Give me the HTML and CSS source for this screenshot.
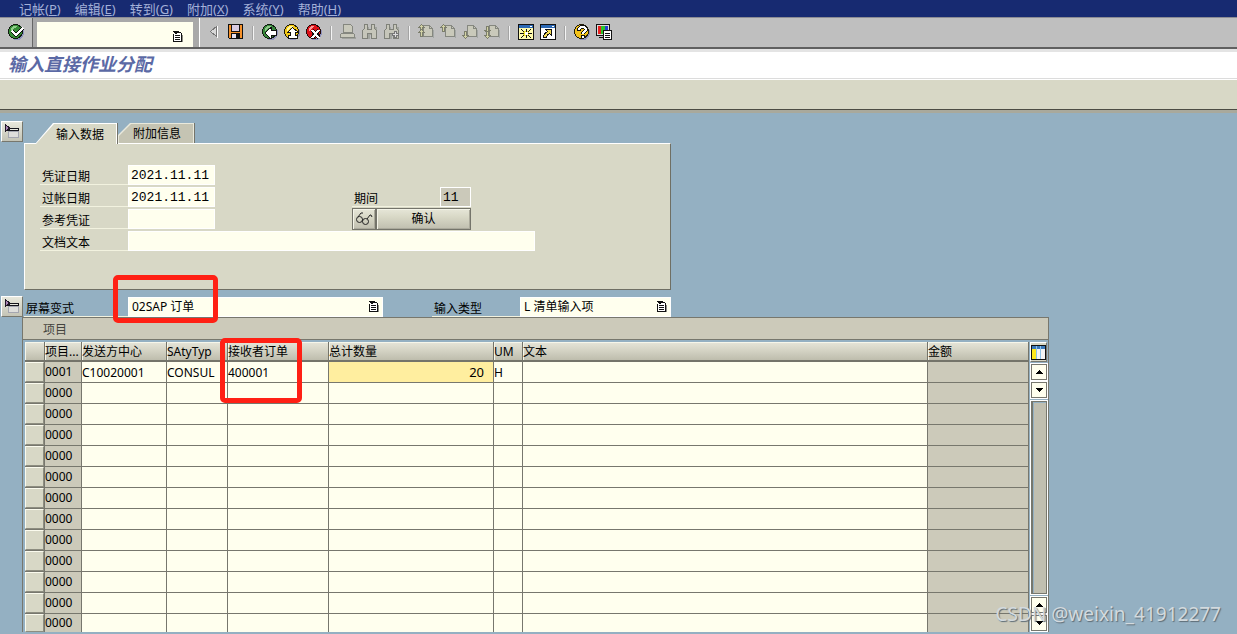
FILE: index.html
```html
<!DOCTYPE html>
<html lang="zh-CN">
<head>
<meta charset="utf-8">
<title>输入直接作业分配</title>
<link rel="stylesheet" href="styles.css">
</head>
<body>
<svg class="defs" aria-hidden="true">
  <symbol id="list" viewBox="0 0 10 12"><path fill="#8d8d86" d="M2 11h8V4H8v6H2z"/><path fill="#fff" d="M1 2h7v8H1z"/><path fill="#111" d="M0 0h6v1H0zM1 1h4v1H1zM2 2h2v1H2zM5 1h3v1H5zM0 3h1v8H0zM8 2h1v9H8zM0 10h9v1H0zM2 4h5v1H2zM2 6h5v1H2zM2 8h5v1H2z"/></symbol>
  <symbol id="page" viewBox="0 0 16 16"><path fill="#a3a7a5" d="M6 14h10V6h-1v8z"/><path fill="#c9c9ba" stroke="#85877f" d="M5.500 1.500h6l3 3v8h-9z"/><path fill="none" stroke="#85877f" d="M11.500 1.500v3h3"/></symbol>
  <symbol id="up" viewBox="0 0 7 8"><path fill="#d3d3a6" stroke="#7c7e6c" d="M3.500.5L.5 3.500h2v4h2v-4h2z"/></symbol>
  <symbol id="down" viewBox="0 0 7 8"><path fill="#d3d3a6" stroke="#7c7e6c" d="M3.500 7.500L.5 4.500h2V.5h2v4h2z"/></symbol>
  <symbol id="bino" viewBox="0 0 16 16"><path fill="#a1a49e" d="M3 3h4v3h4V3h4v12h-5v-4H8v4H3z"/><path fill="#c6c6ba" stroke="#7f8179" d="M2.500 .5h3v5h4v-5h3v4l2 2v8h-5v-5h-4v5h-5v-8l2-2z"/></symbol>
  <symbol id="expand" viewBox="0 0 16 16"><path fill="#fff" d="M4 5h9v8H4z"/><path fill="#dededb" stroke="#a4a6b0" d="M4.500 7.500h10v6h-10z"/><path fill="#15151c" d="M3 4h12v3H3z"/><path fill="#e9e9e0" d="M6 5h8v1H6z"/><path fill="#a985b5" stroke="#221828" d="M1.500.5v7l4-3.500z"/></symbol>
</svg>

<nav class="menubar" aria-label="菜单">
  <a href="#">记帐(<u>P</u>)</a><a href="#">编辑(<u>E</u>)</a><a href="#">转到(<u>G</u>)</a><a href="#">附加(<u>X</u>)</a><a href="#">系统(<u>Y</u>)</a><a href="#">帮助(<u>H</u>)</a>
</nav>

<div class="toolbar">
  <div class="enter"><button class="tool" aria-label="回车"><svg viewBox="0 0 16 16"><circle cx="9" cy="9" r="7" fill="#8f93bd"/><circle cx="7.500" cy="7.500" r="7" fill="#368c36" stroke="#101c10"/><path fill="#8fd08a" d="M3 4l2-2h4v1L5 5 3 7z"/><path fill="none" stroke="#111" stroke-width="4" d="M4 7l4 4 7-7"/><path fill="none" stroke="#fff" stroke-width="2" d="M4 7l4 4 7-7"/></svg></button></div>
  <div class="command"><input type="text" aria-label="命令"><svg class="list-icon"><use href="#list"/></svg></div>
  <div class="tools">
    <button class="tool" aria-label="收起"><svg viewBox="0 0 16 16"><path fill="#d9d9d9" stroke="#777" d="M4.500 7.500l6-5v10z"/><path stroke="#fff" d="M11.500 2v12"/></svg></button>
    <button class="tool" aria-label="保存"><svg viewBox="0 0 16 16"><path fill="#111" d="M0 0h15v15H1L0 14z"/><path fill="#f6912a" d="M1 1h2v13H1zM12 1h2v13h-2zM3 8h9v1H3z"/><path fill="#d8cbe2" d="M4 1h7v6H4z"/><path fill="#e5e0ee" d="M4 10h6v4H4z"/><path fill="#111" d="M8 10h2v4H8z"/></svg></button>
    <i class="sep"></i>
    <button class="tool" aria-label="返回"><svg viewBox="0 0 16 16"><circle cx="9" cy="9" r="7" fill="#8f93bd"/><circle cx="7.500" cy="7.500" r="7" fill="#37883b" stroke="#101c10"/><path fill="#8fc98a" d="M3 4l2-2h4v1L5 5 3 7z"/><path fill="#111" d="M3 8h1V7h1V6h1V5h1V4h1V3h2v3h5v6h-5v3H8v-1H7v-1H6v-1H5v-1H4v-1H3z"/><path fill="#fff" d="M4 9V8h1V7h1V6h1V5h2v2h5v4H9v3H8v-1H7v-1H6v-1H5v-1H4z"/></svg></button>
    <button class="tool" aria-label="退出"><svg viewBox="0 0 16 16"><circle cx="9" cy="9" r="7" fill="#8f93bd"/><circle cx="7.500" cy="7.500" r="7" fill="#f3c814" stroke="#221c08"/><path fill="#fff6a0" d="M3 4l2-2h4v1L5 5 3 7z"/><path fill="#fff" stroke="#111" d="M8.500 3.500l-5 5h3v3h-2v3h9v-3h-2v-3h3z"/></svg></button>
    <button class="tool" aria-label="取消"><svg viewBox="0 0 16 16"><circle cx="9" cy="9" r="7" fill="#8f93bd"/><circle cx="7.500" cy="7.500" r="7" fill="#dc1018" stroke="#240808"/><path fill="#ff9a96" d="M3 4l2-2h3v1L5 5 3 7z"/><path stroke="#111" stroke-width="4" d="M6 6l7 8M13 6l-7 8"/><path stroke="#fff" stroke-width="2" d="M6 6l7 8M13 6l-7 8"/></svg></button>
    <i class="sep"></i>
    <button class="tool" aria-label="打印"><svg viewBox="0 0 16 16"><path fill="#a1a39e" d="M2 13h14v2H2z"/><path fill="#c9c9bb" stroke="#85877f" d="M3.500 .5h7l2 2v6h-9zM1.500 9.500h12l1 1v3H.5v-3z"/></svg></button>
    <button class="tool" aria-label="查找"><svg><use href="#bino"/></svg></button>
    <button class="tool" aria-label="继续查找"><svg viewBox="0 0 16 16"><use href="#bino"/><path fill="#ddd" stroke="#777" d="M10.500 7.500h2v2h2v2h-2v2h-2v-2h-2v-2h2z"/></svg></button>
    <i class="sep"></i>
    <button class="tool" aria-label="首页"><svg viewBox="0 0 16 16"><use href="#page"/><use href="#up" x="0" y="0" width="7" height="8"/><use href="#up" x="0" y="5" width="7" height="8"/></svg></button>
    <button class="tool" aria-label="上一页"><svg viewBox="0 0 16 16"><use href="#page"/><use href="#up" x="0" y="0" width="7" height="8"/></svg></button>
    <button class="tool" aria-label="下一页"><svg viewBox="0 0 16 16"><use href="#page"/><use href="#down" x="0" y="7" width="7" height="8"/></svg></button>
    <button class="tool" aria-label="末页"><svg viewBox="0 0 16 16"><use href="#page"/><use href="#down" x="0" y="2" width="7" height="8"/><use href="#down" x="0" y="7" width="7" height="8"/></svg></button>
    <i class="sep"></i>
    <button class="tool" aria-label="新会话"><svg viewBox="0 0 16 16"><path fill="#111" d="M0 0h16v16H0z"/><path fill="#2c69b5" d="M1 1h14v3H1z"/><path fill="#fff" d="M12 2h2v1h-2z"/><path fill="#fffbb0" d="M1 4h14v11H1z"/><path fill="#f5e62c" d="M5 7h6v5H5z"/><path stroke="#111" d="M3 5l3 3M13 5l-3 3M3 14l3-3M13 14l-3-3M2 9.500h4M10 9.500h4M8.500 5v3M8.500 11v3"/><path fill="#fff" d="M7 8h3v3H7z"/></svg></button>
    <button class="tool" aria-label="创建快捷方式"><svg viewBox="0 0 16 16"><path fill="#111" d="M0 0h16v16H0z"/><path fill="#2c69b5" d="M1 1h14v3H1z"/><path fill="#fff" d="M1 4h14v11H1zM12 2h2v1h-2z"/><path fill="#f5dc54" stroke="#111" d="M5.500 5.500h6v6l-2-2c-2 1-3 2-3 4h-3c0-3 2-5 4-6z"/></svg></button>
    <i class="sep"></i>
    <button class="tool" aria-label="帮助"><svg viewBox="0 0 16 16"><circle cx="9" cy="9" r="7" fill="#8f93bd"/><circle cx="7.500" cy="7.500" r="7" fill="#f3c21a" stroke="#221c08"/><path fill="none" stroke="#111" stroke-width="4" d="M5 7V5l2-2h3l2 2v1L9 9v1M9 11v3"/><path fill="none" stroke="#fff" stroke-width="2" d="M5 6V5l2-2h3l2 2v1L9 9v1M9 12v2"/></svg></button>
    <button class="tool" aria-label="布局"><svg viewBox="0 0 16 16"><path fill="#111" d="M0 0h14v12H0zM3 13h6v1H3z"/><path fill="#ddd" d="M1 1h12v10H1z"/><path fill="#e82020" d="M2 2h3v8H2z"/><path fill="#28c428" d="M5 2h4v8H5z"/><path fill="#2440cc" d="M9 2h3v8H9z"/><path fill="#fff" stroke="#111" d="M7.500 6.500h8v9h-8z"/><path stroke="#111" d="M9 9.500h5M9 11.500h5M9 13.500h5"/></svg></button>
  </div>
</div>

<header class="title"><h1>输入直接作业分配</h1></header>
<div class="appbar"></div>

<main class="work">
  <section class="entry">
    <button class="toggle" aria-label="展开标题"><svg><use href="#expand"/></svg></button>
    <div class="tabbed">
      <div class="tabs" role="tablist">
        <button class="tab active" role="tab" aria-selected="true"><span>输入数据</span></button>
        <button class="tab" role="tab" aria-selected="false"><span>附加信息</span></button>
      </div>
      <div class="panel">
        <label class="lead" for="docdate">凭证日期</label><input id="docdate" class="date" type="text" value="2021.11.11">
        <label class="lead" for="postdate">过帐日期</label><input id="postdate" class="date" type="text" value="2021.11.11">
        <div class="period"><label for="period">期间</label><input id="period" type="text" value="11" readonly></div>
        <label class="lead" for="refdoc">参考凭证</label><input id="refdoc" class="date" type="text">
        <div class="actions"><button class="raised" aria-label="显示"><svg class="glasses" viewBox="0 0 18 14"><g fill="none" stroke="#222"><circle cx="4.500" cy="7.500" r="3"/><circle cx="10.500" cy="9.500" r="3"/><path d="M3 5l3-4h2M12 7l3-4h1l1 2M7 8h1"/></g></svg></button><button class="raised">确认</button></div>
        <label class="lead" for="doctext">文档文本</label><input id="doctext" class="wide" type="text">
      </div>
    </div>
  </section>

  <section class="variant">
    <button class="toggle" aria-label="展开项目"><svg><use href="#expand"/></svg></button>
    <label class="variant-label" for="variant">屏幕变式</label>
    <div class="combo variant-box"><select id="variant"><option>02SAP 订单</option></select><svg class="list-icon"><use href="#list"/></svg></div>
    <label class="kind-label" for="kind">输入类型</label>
    <div class="combo kind-box"><select id="kind"><option>L 清单输入项</option></select><svg class="list-icon"><use href="#list"/></svg></div>
    <span class="mark mark-variant"></span>
  </section>

  <section class="items">
    <h2>项目</h2>
    <div class="grid">
      <table>
        <colgroup><col class="c-sel"><col class="c-no"><col class="c-center"><col class="c-type"><col class="c-order"><col class="c-qty"><col class="c-um"><col><col class="c-amount"></colgroup>
        <thead><tr><th aria-label="选择"></th><th>项目...</th><th>发送方中心</th><th>SAtyTyp</th><th>接收者订单</th><th>总计数量</th><th>UM</th><th>文本</th><th>金额</th></tr></thead>
        <tbody id="rows"></tbody>
      </table>
      <div class="scroll">
        <button class="config" aria-label="表格设置"><svg viewBox="0 0 15 15"><path fill="#111" d="M0 0h15v15H0z"/><path fill="#3979bb" d="M1 1h13v3H1z"/><path fill="#ffe91c" d="M1 4h4v10H1z"/><path fill="#f4f4f4" d="M6 4h3v10H6zM10 4h4v10h-4z"/><path fill="#8fc3e8" d="M5 1h1v13H5zM9 1h1v13H9z"/></svg></button>
        <button class="arrow" aria-label="首行"><svg viewBox="0 0 8 4"><path d="M0 4l4-4 4 4z"/></svg></button>
        <button class="arrow" aria-label="上一行"><svg viewBox="0 0 8 4"><path d="M0 0h8L4 4z"/></svg></button>
        <div class="track"></div>
        <button class="arrow" aria-label="下一行"><svg viewBox="0 0 8 4"><path d="M0 4l4-4 4 4z"/></svg></button>
        <button class="arrow" aria-label="末行"><svg viewBox="0 0 8 4"><path d="M0 0h8L4 4z"/></svg></button>
      </div>
    </div>
    <span class="mark mark-order"></span>
  </section>
</main>
<div class="watermark">CSDN @weixin_41912277</div>
<script src="rows.js"></script>
</body>
</html>
```
FILE: rows.js
```
const fields = ["发送方中心", "作业类型", "接收者订单", "总计数量", "单位", "文本"];
const first = ["C10020001", "CONSUL", "400001", "20", "H", ""];
const body = document.getElementById("rows");

for (let r = 0; r < 13; r++) {
  const cells = fields.map((name, i) => {
    const value = r === 0 ? first[i] : "";
    const cls = r === 0 && i === 3 ? ' class="qty"' : "";
    return `<td${cls}><input type="text" aria-label="${name} ${r + 1}" value="${value}"></td>`;
  }).join("");
  body.insertAdjacentHTML("beforeend",
    `<tr><td class="pick"><button aria-label="选择行 ${r + 1}"></button></td><td class="fixed">${r === 0 ? "0001" : "0000"}</td>${cells}<td class="fixed"></td></tr>`);
}
```
FILE: styles.css
```css
* { box-sizing: border-box; }

body {
  margin: 0;
  min-height: 100vh;
  overflow: hidden;
  position: relative;
  background: #94b0c2;
  color: #000;
  font: 12px/16px "Noto Sans", "Noto Sans CJK SC", sans-serif;
}

button, input, select { font: inherit; color: inherit; margin: 0; padding: 0; border: 0; border-radius: 0; }
input, select { background: #ffffee; min-width: 0; outline: 0; }
button { background: none; }
svg { display: block; shape-rendering: crispEdges; }
.defs { position: absolute; width: 0; height: 0; }

.menubar { display: flex; gap: 14px; height: 17px; padding-left: 19px; background: #172a71; }
.menubar a { color: #a3b0d8; text-decoration: none; font-size: 13px; line-height: 18px; }

.toolbar { display: flex; height: 32px; background: #bfbfbf; border-top: 1px solid #8c8c94; border-bottom: 2px solid #606060; }
.enter { width: 33px; padding: 6px 8px; border-right: 1px solid #666; }
.command { position: relative; width: 167px; padding: 4px 6px 0 4px; background: #a9a9a9; border-right: 1px solid #fff; }
.command input { display: block; width: 100%; height: 25px; padding: 0 20px 0 4px; }
.list-icon { position: absolute; right: 4px; top: 4px; width: 10px; height: 12px; pointer-events: none; }
.command .list-icon { right: 16px; top: 13px; }
.tools { display: flex; gap: 6px; padding: 6px; }
.tool, .tool svg { display: block; width: 16px; height: 16px; }
.sep { width: 2px; height: 14px; margin: 2px 2px 0; background: #f4f4f4; border-left: 1px solid #a4a4a4; }

.title { height: 30px; background: #fff; border-top: 3px solid #e4e4e4; border-bottom: 1px solid #dcdcdc; padding-left: 8px; }
h1 { margin: 0; color: #5b69a5; font: italic bold 18px/22px "Noto Sans CJK SC", sans-serif; }
.appbar { height: 34px; background: #d8d8c6; border-top: 1px solid #fff; border-bottom: 3px solid #a9a99c; box-shadow: inset 0 -1px #4c4c44; }

.work { padding: 10px 188px 0 0; }
.entry { display: flex; align-items: flex-start; gap: 1px; }
.toggle { display: grid; place-items: center; flex: none; width: 22px; height: 21px; border: 1px solid; border-color: #fff #77776d #77776d #fff; background: linear-gradient(#e8e8dc, #c4c4b6); margin-left: 1px; }
.entry .toggle { margin-top: -2px; }
.toggle svg { width: 16px; height: 16px; }
.tabbed { flex: 1; max-width: 647px; }
.tabs { display: flex; padding-left: 11px; height: 20px; }
.tab { position: relative; isolation: isolate; height: 20px; background: #fff; }
.tab::before { content: ""; position: absolute; z-index: -1; inset: 1px 1px 0; background: #d8d8c6; }
.tab.active { width: 83px; height: 21px; padding: 2px 0 0 8px; clip-path: polygon(18px 0, 100% 0, 100% 100%, 0 100%); border-right: 1px solid #74746a; }
.tab.active::before { clip-path: polygon(18px 0, 100% 0, 100% 100%, 0 100%); }
.tab:not(.active) { width: 77px; padding: 2px 0 0 2px; background: #e9e9dc; clip-path: polygon(12px 0, 100% 0, 100% 100%, 0 100%, 0 12px); border-right: 1px solid #74746a; }
.tab:not(.active)::before { background: #c5c4b3; clip-path: polygon(12px 0, 100% 0, 100% 100%, 0 100%, 0 12px); }

.panel {
  display: grid;
  grid-template-columns: 88px 224px 119px;
  grid-auto-rows: 20px;
  row-gap: 2px;
  padding: 21px 15px 38px;
  background: #d8d8c6;
  border: 1px solid;
  border-color: #fff #6f6f64 #6f6f64 #fff;
}
label { height: 20px; padding: 4px 0 0 2px; border-bottom: 1px solid #f2f2df; line-height: 15px; }
.lead { grid-column: 1; }
.date, .period input { border: 1px solid #fff; padding: 2px 0 0 2px; font: 13px/16px "Liberation Mono", monospace; }
.date { width: 87px; grid-column: 2; }
.period { display: grid; grid-template-columns: 88px 31px; }
.period input { background: #cbc9ba; }
.actions { display: grid; grid-template-columns: 24px 1fr; margin-top: -1px; height: 22px; }
.raised { display: grid; place-items: center; border: 1px solid #74746a; box-shadow: inset 1px 1px #f4f4e8, inset -1px -1px #aaa99b; background: linear-gradient(#e6e6d8, #d8d8c6 40%, #bfbeaf); }
.glasses { width: 18px; height: 14px; shape-rendering: auto; }
.wide { grid-column: 2 / -1; margin-right: -64px; border: 1px solid #fff; padding-left: 3px; }

.variant { position: relative; display: flex; margin-top: 7px; height: 20px; }
.variant .toggle { margin-top: -1px; }
.variant-label { width: 104px; margin-left: 1px; }
.combo { position: relative; height: 20px; }
.combo select { display: block; appearance: none; width: 100%; height: 20px; padding: 0 20px 0 3px; border: 1px solid #fff; }
.variant-box { width: 255px; }
.kind-label { width: 88px; margin-left: 49px; }
.kind-box { width: 151px; }

.items { position: relative; margin-left: 22px; border: solid #77776d; border-width: 1px 1px 0; }
h2 { margin: 0; height: 22px; padding: 4px 0 0 20px; font: inherit; color: #44443e; background: #cccaba; border-bottom: 1px solid #77776d; }
.grid { display: flex; padding: 2px 0 0 2px; }
table { flex: 1; min-width: 0; width: 0; table-layout: fixed; border-spacing: 0; }
.c-sel { width: 20px; }
.c-no { width: 37px; }
.c-center { width: 85px; }
.c-type { width: 61px; }
.c-order, .c-amount { width: 101px; }
.c-qty { width: 165px; }
.c-um { width: 29px; }
th { height: 20px; padding: 2px 0 0; font-weight: 400; line-height: 16px; text-align: left; white-space: nowrap; overflow: hidden; background: linear-gradient(#e6e5d9, #d5d4c5 45%, #bebdad); border: solid #74746a; border-width: 0 1px 2px 0; box-shadow: inset 1px 1px #f6f6ea; }
td { height: 21px; padding: 0; background: #ffffee; border: solid #77776d; border-width: 0 1px 1px 0; line-height: 16px; }
td input { display: block; width: 100%; height: 20px; background: transparent; }
.pick { background: #77776d; }
.pick button { display: block; width: 100%; height: 20px; background: #d8d8c6; border: 1px solid; border-color: #fbfbee #8d8d80 #8d8d80 #fbfbee; }
.fixed { background: #cccaba; }
.qty { background: #ffee9f; }
.qty input { text-align: right; padding-right: 9px; font-size: 13px; }
tr:last-child .pick button { height: 18px; }
tbody tr:last-child td { height: 18px; border-bottom: 0; }
tbody tr:last-child input { height: 18px; }

.scroll { display: flex; flex-direction: column; gap: 2px; width: 19px; padding: 0 1px 1px; }
.config { display: grid; place-items: center; height: 20px; border: 1px solid; border-color: #fff #77776d #77776d #fff; background: #d8d8c6; }
.config svg { width: 15px; height: 15px; }
.arrow { display: grid; place-items: center; flex: none; width: 16px; height: 16px; margin-left: 1px; background: #ffffee; border: 1px solid #77776d; outline: 1px solid #fff; }
.arrow svg { width: 8px; height: 4px; }
.track { flex: 1; width: 16px; margin: 1px 0 1px 1px; background: #c1bfb0; border: 1px solid #77776d; border-left-width: 2px; outline: 1px solid #fff; box-shadow: inset 1px 1px #94b0c2; }

.mark { position: absolute; border: 5px solid #ff2014; border-radius: 5px; pointer-events: none; }
.mark-variant { left: 113px; top: -22px; width: 105px; height: 48px; z-index: 1; }
.mark-order { left: 197px; top: 20px; width: 82px; height: 65px; }

.watermark { position: absolute; right: 16px; bottom: 6px; color: #d3dade; font: 19px/28px "Noto Sans", sans-serif; text-shadow: 1px 1px 1px #5d6c76; white-space: nowrap; }
```
